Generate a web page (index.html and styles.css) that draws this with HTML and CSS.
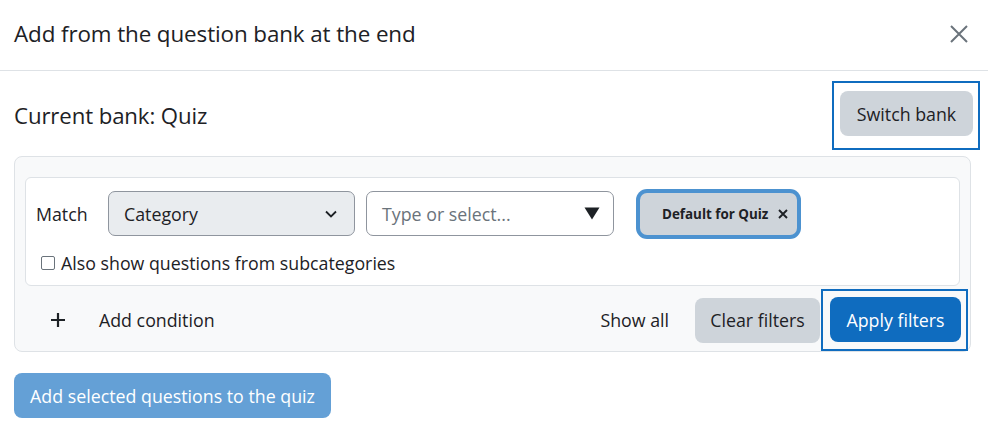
FILE: index.html
```html
<!DOCTYPE html>
<html lang="en">
<head>
<meta charset="utf-8">
<title>Add from the question bank</title>
<link rel="stylesheet" href="styles.css">
</head>
<body>
<div class="modal">
  <div class="modal-header">
    <h5 class="modal-title">Add from the question bank at the end</h5>
    <button class="close-btn" aria-label="Close">
      <svg width="20" height="20" viewBox="0 0 20 20"><path d="M2 2 L18 18 M18 2 L2 18" stroke="#6a737b" stroke-width="2" fill="none"/></svg>
    </button>
  </div>
  <div class="modal-body">
    <div class="bank-row">
      <div class="bank-label">Current bank: Quiz</div>
      <div class="focus-ring focus-switch"><button class="btn btn-secondary">Switch bank</button></div>
    </div>
    <div class="filter-box">
      <div class="condition-card">
        <div class="condition-row">
          <span class="match-label">Match</span>
          <div class="select">
            <span>Category</span>
            <svg width="14" height="10" viewBox="0 0 14 10"><path d="M2 2.5 L7 7.5 L12 2.5" stroke="#1d2125" stroke-width="1.8" fill="none"/></svg>
          </div>
          <div class="input">
            <span class="placeholder">Type or select...</span>
            <svg width="16" height="13" viewBox="0 0 16 13"><path d="M0.5 0.5 H15.5 L8 12.5 Z" fill="#1d2125"/></svg>
          </div>
          <div class="badge"><span>Default for Quiz</span>
            <svg class="badge-x" width="10" height="10" viewBox="0 0 10 10" aria-label="Remove"><path d="M1 1 L9 9 M9 1 L1 9" stroke="#1d2125" stroke-width="1.9" fill="none"/></svg>
          </div>
        </div>
        <label class="check-row"><span class="checkbox"></span>Also show questions from subcategories</label>
      </div>
      <div class="actions-row">
        <div class="add-condition">
          <svg width="16" height="16" viewBox="0 0 16 16"><path d="M8 1 V15 M1 8 H15" stroke="#1d2125" stroke-width="2.2" fill="none"/></svg>
          <span>Add condition</span>
        </div>
        <div class="right-actions">
          <span class="show-all">Show all</span>
          <button class="btn btn-secondary">Clear filters</button>
          <div class="focus-ring focus-apply"><button class="btn btn-primary">Apply filters</button></div>
        </div>
      </div>
    </div>
    <button class="btn btn-primary disabled add-selected">Add selected questions to the quiz</button>
  </div>
</div>
</body>
</html>
```
FILE: styles.css
```css
* { box-sizing: border-box; }
html, body { margin: 0; padding: 0; background: #fff; }
body {
  font-family: "Open Sans", "Noto Sans", sans-serif;
  color: #1d2125;
  font-size: 17.8px;
  width: 988px;
  height: 435px;
  overflow: hidden;
}
.modal-header {
  height: 71px;
  border-bottom: 1px solid #dee2e6;
  display: flex;
  align-items: center;
  justify-content: space-between;
  padding: 0 18px 3px 14px;
}
.modal-title {
  margin: 0;
  font-size: 22.4px;
  font-weight: 400;
  letter-spacing: -0.1px;
}
.close-btn {
  background: none;
  border: 0;
  padding: 0;
  width: 22px;
  height: 22px;
  display: flex;
  align-items: center;
  justify-content: center;
}
.modal-body { padding: 10px 9px 0 14px; }
.bank-row {
  display: flex;
  align-items: center;
  justify-content: space-between;
}
.bank-label { font-size: 22.2px; letter-spacing: -0.1px; }
.btn {
  font-family: inherit;
  font-size: 17.8px;
  color: #1d2125;
  border: 0;
  border-radius: 8px;
  height: 45px;
  padding: 0 12px;
  display: inline-flex;
  align-items: center;
  justify-content: center;
  white-space: nowrap;
}
.btn-secondary { background: #ced4da; }
.btn-primary { background: #0f6cbf; color: #fff; }
.btn-primary.disabled { background: #64a0d6; }
.focus-ring { border: 2px solid #0f6cbf; display: flex; }
.focus-switch { padding: 8px 5px 12px 6px; margin-right: -1px; }
.focus-switch .btn { width: 133px; }
.focus-apply { padding: 6px 5px 7px 7px; margin-left: 1px; }
.focus-apply .btn { width: 131px; }
.filter-box {
  margin-top: 6px;
  margin-right: 8px;
  background: #f8f9fa;
  border: 1px solid #dee2e6;
  border-radius: 8px;
  padding: 20px 10px 0 10px;
  height: 196px;
}
.condition-card {
  background: #fff;
  border: 1px solid #dee2e6;
  border-radius: 6px;
  height: 109px;
  padding: 13px 10px 0 10px;
}
.condition-row { display: flex; align-items: center; }
.match-label { width: 72px; }
.select {
  width: 247px;
  height: 45px;
  background: #e9ecef;
  border: 1px solid #8f959e;
  border-radius: 7px;
  display: flex;
  align-items: center;
  justify-content: space-between;
  padding: 0 16px 0 15px;
}
.input {
  width: 248px;
  height: 45px;
  margin-left: 11px;
  background: #fff;
  border: 1px solid #8f959e;
  border-radius: 7px;
  display: flex;
  align-items: center;
  justify-content: space-between;
  padding: 0 13px 0 15px;
}
.placeholder { color: #6a737b; }
.badge {
  margin-left: 26px;
  width: 157px;
  height: 42px;
  background: #ced4da;
  border-radius: 7px;
  box-shadow: 0 0 0 4px #4c92d0;
  font-size: 13.4px;
  font-weight: 700;
  display: flex;
  align-items: center;
  padding-left: 22px;
}
.badge-x { margin-left: 10px; }
.check-row {
  display: flex;
  align-items: center;
  margin-top: 15px;
  margin-left: 5px;
}
.checkbox {
  width: 14px;
  height: 14px;
  border: 1px solid #6a737b;
  border-radius: 2px;
  margin-right: 6px;
  background: #fff;
}
.actions-row {
  display: flex;
  align-items: center;
  justify-content: space-between;
  margin-top: 3px;
  margin-right: -8px;
}
.add-condition { display: flex; align-items: center; padding-left: 25px; }
.add-condition span { margin-left: 33px; }
.right-actions { display: flex; align-items: center; }
.show-all { margin-right: 26px; }
.right-actions > .btn { width: 125px; margin-right: 0; }
.add-selected {
  margin-top: 21px;
  width: 317px;
}
```
